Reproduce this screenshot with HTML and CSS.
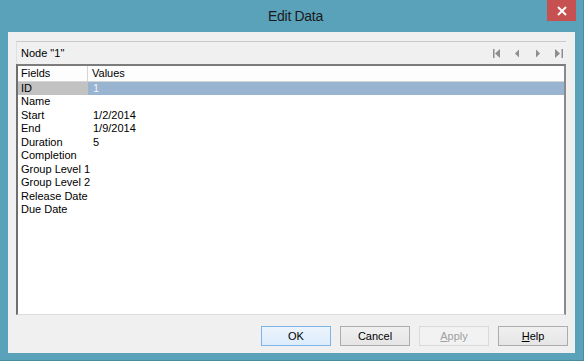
FILE: index.html
```html
<!DOCTYPE html>
<html lang="en">
<head>
  <meta charset="UTF-8">
  <title>Edit Data</title>
  <link rel="stylesheet" href="styles.css">
</head>
<body>
  <div class="window">
    <div class="titlebar">
      <span class="title">Edit Data</span>
      <button class="close" aria-label="Close">
        <svg width="10" height="10" viewBox="0 0 10 10"><path d="M1 1L9 9M9 1L1 9" stroke="#fff" stroke-width="2"/></svg>
      </button>
    </div>
    <div class="client">
      <div class="node-bar">
        <span>Node "1"</span>
        <svg class="nav" width="72" height="11" viewBox="0 0 72 11">
          <rect x="1" y="1" width="1.5" height="9" fill="#8e8e8e"/>
          <polygon points="8,1 3,5.5 8,10" fill="#8e8e8e"/>
          <polygon points="27,1.5 23,5.5 27,9.5" fill="#8e8e8e"/>
          <polygon points="44,1.5 48,5.5 44,9.5" fill="#8e8e8e"/>
          <polygon points="63,1 68,5.5 63,10" fill="#8e8e8e"/>
          <rect x="69.5" y="1" width="1.5" height="9" fill="#8e8e8e"/>
        </svg>
      </div>
      <div class="list">
        <div class="row head">
          <div class="field">Fields</div>
          <div class="value">Values</div>
        </div>
        <div class="row selected">
          <div class="field">ID</div>
          <div class="value">1</div>
        </div>
        <div class="row"><div class="field">Name</div><div class="value"></div></div>
        <div class="row"><div class="field">Start</div><div class="value">1/2/2014</div></div>
        <div class="row"><div class="field">End</div><div class="value">1/9/2014</div></div>
        <div class="row"><div class="field">Duration</div><div class="value">5</div></div>
        <div class="row"><div class="field">Completion</div><div class="value"></div></div>
        <div class="row"><div class="field">Group Level 1</div><div class="value"></div></div>
        <div class="row"><div class="field">Group Level 2</div><div class="value"></div></div>
        <div class="row"><div class="field">Release Date</div><div class="value"></div></div>
        <div class="row"><div class="field">Due Date</div><div class="value"></div></div>
      </div>
      <div class="buttons">
        <button class="btn default">OK</button>
        <button class="btn">Cancel</button>
        <button class="btn" disabled><u>A</u>pply</button>
        <button class="btn"><u>H</u>elp</button>
      </div>
    </div>
  </div>
</body>
</html>
```

FILE: styles.css
```css
body {
  margin: 0;
  font-family: "Liberation Sans", Arial, sans-serif;
  font-size: 11px;
  color: #000;
  background: #ffffff;
}
.window {
  width: 583px;
  height: 360px;
  background: #5aa2ba;
  border-right: 1px solid #4a8ca1;
  border-bottom: 1px solid #4a8ca1;
  display: flex;
  flex-direction: column;
}
.titlebar {
  position: relative;
  height: 32px;
  display: flex;
  align-items: center;
  justify-content: center;
}
.title {
  font-size: 14px;
  color: #1b1b1b;
  margin-top: -1px;
  margin-left: 8px;
  letter-spacing: -0.3px;
}
.close {
  position: absolute;
  top: 0;
  right: 7px;
  width: 29px;
  height: 21px;
  border: none;
  padding: 0;
  background: #c75050;
  display: flex;
  align-items: center;
  justify-content: center;
}
.client {
  margin: 0 8px;
  height: 321px;
  background: #f0f0f0;
  display: flex;
  flex-direction: column;
  padding: 9px 7px 7px 8px;
  box-sizing: border-box;
}
.node-bar {
  height: 23px;
  margin-right: 2px;
  border-top: 1px solid #c9c9c9;
  border-left: 1px solid #e0e0e0;
  box-sizing: border-box;
  display: flex;
  align-items: center;
  justify-content: space-between;
  padding: 0 2px 0 4px;
}
.nav {
  display: block;
}
.list {
  height: 251px;
  margin-right: 2px;
  background: #fff;
  border-top: 2px solid #7c7c7c;
  border-left: 2px solid #6f6f6f;
  border-right: 2px solid #8a8a8a;
  border-bottom: 1px solid #dcdcdc;
  box-sizing: border-box;
  display: flex;
  flex-direction: column;
}
.row {
  display: flex;
  height: 13.5px;
  line-height: 13.5px;
}
.row.head {
  height: 15px;
  line-height: 15px;
  border-bottom: 1px solid #d5d5d5;
  background: #fdfdfd;
}
.field {
  width: 70px;
  padding-left: 3px;
  box-sizing: border-box;
  white-space: nowrap;
}
.head .field {
  border-right: 1px solid #d5d5d5;
}
.value {
  flex: 1;
  padding-left: 5px;
}
.head .value {
  padding-left: 4px;
}
.selected {
  height: 13px;
}
.selected .field {
  background: #c2c2c2;
}
.selected .value {
  background: #99b4d1;
  color: #eef3f8;
}
.buttons {
  margin-top: 11px;
  display: flex;
  justify-content: flex-end;
  gap: 9px;
}
.btn {
  width: 70px;
  height: 20px;
  font-family: "Liberation Sans", Arial, sans-serif;
  font-size: 11px;
  color: #000;
  background: linear-gradient(#f0f0f0, #e5e5e5);
  border: 1px solid #acacac;
  padding: 0;
}
.btn.default {
  border-color: #7eb4ea;
  background: linear-gradient(#ecf4fc, #dcecfc);
}
.btn[disabled] {
  color: #a0a0a0;
  background: #f2f2f2;
  border-color: #dadada;
}
```
